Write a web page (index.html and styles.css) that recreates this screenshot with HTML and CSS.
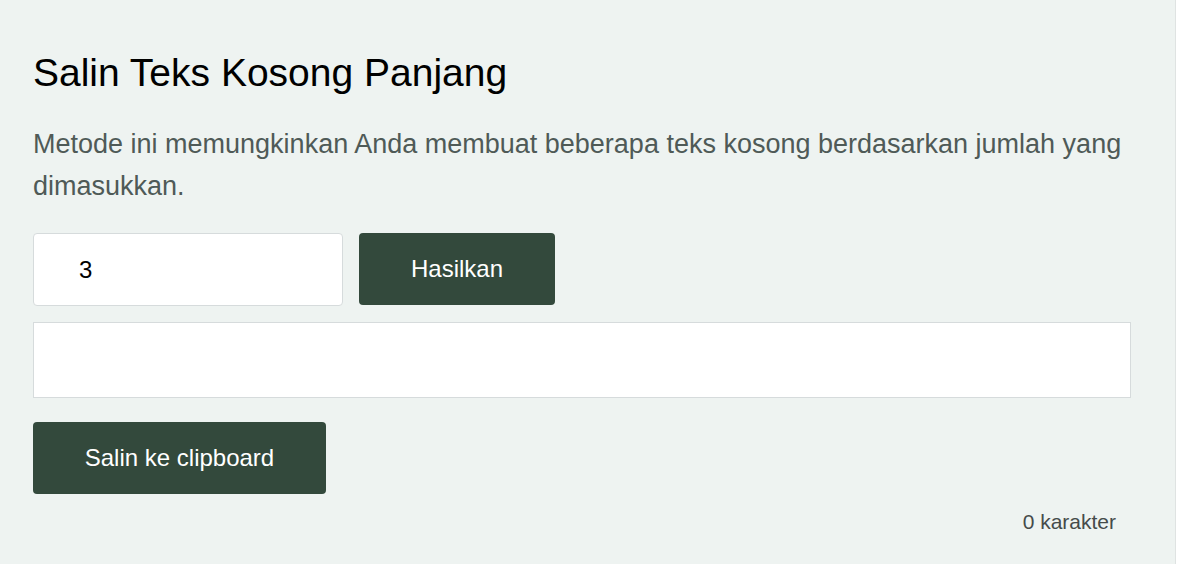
FILE: index.html
```html
<!DOCTYPE html>
<html lang="id">
<head>
    <meta charset="UTF-8">
    <meta name="viewport" content="width=device-width, initial-scale=1.0">
    <title>Salin Teks Kosong Panjang</title>
    <link rel="stylesheet" href="styles.css">
</head>
<body>

<div class="panel">
    <h1>Salin Teks Kosong Panjang</h1>
    <p class="intro">Metode ini memungkinkan Anda membuat beberapa teks kosong berdasarkan jumlah yang dimasukkan.</p>

    <div class="controls">
        <input class="count-input" type="number" value="3" min="1">
        <button class="btn generate-btn">Hasilkan</button>
    </div>

    <div class="output"></div>

    <button class="btn copy-btn">Salin ke clipboard</button>

    <div class="counter">0 karakter</div>
</div>

</body>
</html>
```

FILE: styles.css
```css
body {
    margin: 0;
    background-color: #ffffff;
    font-family: 'Liberation Sans', Arial, sans-serif;
}

.panel {
    width: 1176px;
    box-sizing: border-box;
    min-height: 564px;
    padding: 51px 44px 20px 33px;
    background-color: #eef3f1;
    border-right: 1px solid #dfe3e2;
}

h1 {
    margin: 0 0 28px;
    font-size: 39px;
    font-weight: normal;
    color: #000;
}

.intro {
    margin: 0 0 26px;
    font-size: 27px;
    line-height: 42px;
    color: #4f5a57;
}

.controls {
    display: flex;
    gap: 16px;
    margin-bottom: 16px;
}

.count-input {
    width: 310px;
    height: 73px;
    box-sizing: border-box;
    padding: 0 0 0 45px;
    border: 1px solid #d6dbdc;
    border-radius: 4px;
    font-family: inherit;
    font-size: 24px;
    color: #000;
    background: #fff;
    -moz-appearance: textfield;
}

.count-input::-webkit-inner-spin-button,
.count-input::-webkit-outer-spin-button {
    -webkit-appearance: none;
    margin: 0;
}

.btn {
    height: 72px;
    border: none;
    border-radius: 4px;
    background-color: #33493c;
    color: #fff;
    font-family: inherit;
    font-size: 24px;
    cursor: pointer;
}

.generate-btn {
    width: 196px;
}

.output {
    height: 76px;
    box-sizing: border-box;
    background: #fff;
    border: 1px solid #d6dbdc;
    margin-bottom: 24px;
}

.copy-btn {
    width: 293px;
    display: block;
}

.counter {
    text-align: right;
    margin-top: 16px;
    padding-right: 15px;
    font-size: 21px;
    color: #454b4a;
}
```
